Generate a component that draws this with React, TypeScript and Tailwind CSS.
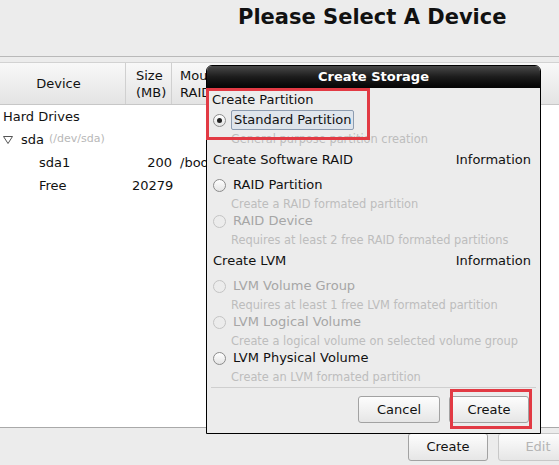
import { ReactNode } from "react";

const font = { fontFamily: '"DejaVu Sans", Verdana, sans-serif' };

const Radio = ({ checked = false, disabled = false }: { checked?: boolean; disabled?: boolean }) => (
  <span
    className={`flex h-[13px] w-[13px] shrink-0 items-center justify-center rounded-full border ${
      disabled ? "border-[#c4c4c4] bg-[#ececec]" : "border-[#8c8c8c] bg-gradient-to-b from-[#ffffff] to-[#e4e4e4]"
    }`}
  >
    {checked && <span className="h-[5px] w-[5px] rounded-full bg-[#222]" />}
  </span>
);

const Option = ({
  label,
  checked,
  disabled,
  focus,
}: {
  label: string;
  checked?: boolean;
  disabled?: boolean;
  focus?: boolean;
}) => (
  <div className="flex h-[20px] items-center pl-[6px]">
    <Radio checked={checked} disabled={disabled} />
    {focus ? (
      <span className="ml-[5px] flex h-[20px] items-center rounded-[2px] border border-[#8d9cb0] bg-[#dfe5ec] px-[2px] text-[13px] leading-[16px] text-[#111]">
        {label}
      </span>
    ) : (
      <span className={`ml-[7px] text-[13px] ${disabled ? "text-[#a6a6a6]" : "text-[#111]"}`}>{label}</span>
    )}
  </div>
);

const Desc = ({ children }: { children: ReactNode }) => (
  <div className="h-[16px] pl-[24px] pt-[2px] text-[11.4px] leading-[14px] text-[#bdbdbd]">{children}</div>
);

const Section = ({ title }: { title: string }) => (
  <div className="flex h-[29px] items-start justify-between pl-[6px] pr-[9px] pt-[5px] text-[13px] leading-[18px] text-[#111]">
    <span>{title}</span>
    <span>Information</span>
  </div>
);

const Btn = ({ children, disabled, className = "" }: { children: ReactNode; disabled?: boolean; className?: string }) => (
  <div
    className={`flex items-center justify-center rounded-[3px] border border-[#a2a2a2] bg-gradient-to-b from-[#fdfdfd] to-[#e6e6e6] text-[13px] ${
      disabled ? "text-[#b4b4b4] border-[#c8c8c8]" : "text-[#111]"
    } ${className}`}
  >
    {children}
  </div>
);

const Row = ({ children }: { children: ReactNode }) => (
  <div className="flex h-[23px] items-center text-[13px] text-[#111]">{children}</div>
);

export default function App() {
  return (
    <div style={font} className="relative flex h-[465px] w-[559px] flex-col overflow-hidden bg-[#ececec]">
      {/* header */}
      <div className="h-[57px] border-b border-[#b9b9b9] pl-[238px] pt-[5px]">
        <h1 className="text-[21px] font-bold leading-[24px] text-[#111]">Please Select A Device</h1>
      </div>

      {/* device table */}
      <div className="mt-[5px] flex flex-1 flex-col border-t border-[#d2d2d2] bg-white">
        <div className="flex h-[42px] border-b border-[#c7c7c7] bg-gradient-to-b from-[#f8f8f8] to-[#e4e4e4] text-[13px] leading-[17px] text-[#111]">
          <div className="flex w-[126px] items-center justify-center border-r border-[#d0d0d0] pr-[8px]">Device</div>
          <div className="flex w-[46px] flex-col justify-center border-r border-[#d0d0d0] pl-[10px]">
            <span>Size</span>
            <span>(MB)</span>
          </div>
          <div className="flex flex-col justify-center pl-[8px]">
            <span>Mount Point/</span>
            <span>RAID/Volume</span>
          </div>
        </div>
        <div className="flex-1">
          <Row>
            <span className="pl-[3px]">Hard Drives</span>
          </Row>
          <Row>
            <svg width="10" height="8" viewBox="0 0 10 8" className="ml-[3px] mr-[8px]">
              <path d="M0.5 0.5 L9.5 0.5 L5 7.5 Z" fill="none" stroke="#555" strokeWidth="1" />
            </svg>
            <span>sda</span>
            <span className="ml-[5px] text-[11px] text-[#b8b8b8]">(/dev/sda)</span>
          </Row>
          <Row>
            <span className="w-[132px] pl-[39px]">sda1</span>
            <span className="w-[40px] text-right">200</span>
            <span className="pl-[8px]">/boot</span>
          </Row>
          <Row>
            <span className="w-[132px] pl-[39px]">Free</span>
            <span className="w-[40px] text-right">20279</span>
          </Row>
        </div>
      </div>

      {/* bottom bar */}
      <div className="flex h-[38px] items-start gap-[10px] border-t border-[#a9a9a9] pl-[408px] pt-[5px]">
        <Btn className="h-[28px] w-[80px] shrink-0">Create</Btn>
        <Btn disabled className="h-[28px] w-[80px] shrink-0">
          Edit
        </Btn>
      </div>

      {/* Create Storage dialog */}
      <div className="absolute left-[206px] top-[65px] flex h-[369px] w-[335px] flex-col rounded-t-[6px] border border-black bg-[#ececec]">
        <div className="flex h-[22px] items-center justify-center rounded-t-[5px] bg-gradient-to-b from-[#4a4a4a] via-[#1c1c1c] to-[#050505] text-[13px] font-bold text-white">
          Create Storage
        </div>
        <div className="flex h-[22px] items-start pl-[5px] pt-[3px] text-[13px] leading-[17px] text-[#111]">Create Partition</div>
        <Option label="Standard Partition" checked focus />
        <Desc>General purpose partition creation</Desc>
        <Section title="Create Software RAID" />
        <Option label="RAID Partition" />
        <Desc>Create a RAID formated partition</Desc>
        <Option label="RAID Device" disabled />
        <Desc>Requires at least 2 free RAID formated partitions</Desc>
        <Section title="Create LVM" />
        <Option label="LVM Volume Group" disabled />
        <Desc>Requires at least 1 free LVM formated partition</Desc>
        <Option label="LVM Logical Volume" disabled />
        <Desc>Create a logical volume on selected volume group</Desc>
        <Option label="LVM Physical Volume" />
        <Desc>Create an LVM formated partition</Desc>
        <div className="mx-[4px] mt-[3px] border-t border-[#cfcfcf] border-b-white" />
        <div className="flex flex-1 items-start justify-end gap-[9px] pr-[11px] pt-[8px]">
          <Btn className="h-[27px] w-[82px]">Cancel</Btn>
          <Btn className="h-[27px] w-[80px]">Create</Btn>
        </div>

        {/* annotation boxes */}
        <div className="pointer-events-none absolute left-[-1px] top-[22px] h-[52px] w-[164px] border-[3px] border-[#e23a44]" />
        <div className="pointer-events-none absolute left-[243px] top-[323px] h-[40px] w-[82px] border-[3px] border-[#e23a44]" />
      </div>
    </div>
  );
}
